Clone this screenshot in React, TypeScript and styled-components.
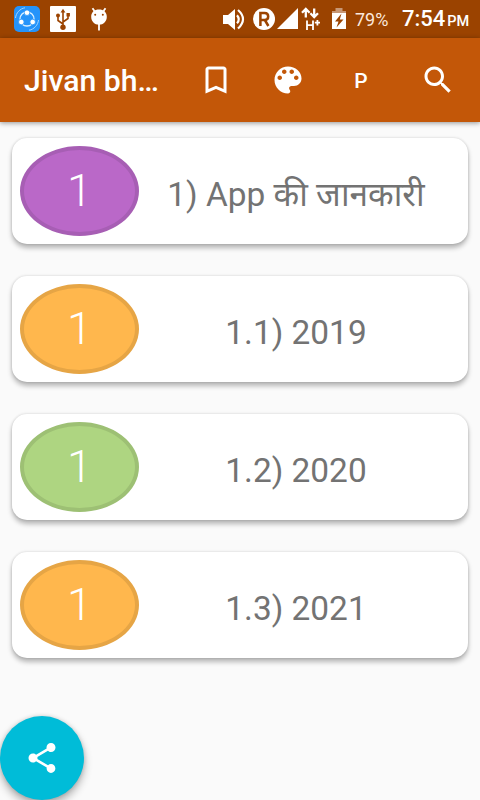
import React from "react";
import styled, { createGlobalStyle } from "styled-components";

const GlobalStyle = createGlobalStyle`
  * { box-sizing: border-box; }
  body { margin: 0; background: #fafafa; font-family: Roboto, "Noto Sans Devanagari", "Noto Sans", sans-serif; }
`;

const Screen = styled.div`
  position: relative;
  width: 480px;
  height: 800px;
  overflow: hidden;
  background: #fafafa;
  display: flex;
  flex-direction: column;
`;

const StatusBar = styled.header`
  flex: none;
  height: 38px;
  background: #9b4300;
  color: #fff;
  display: flex;
  align-items: center;
  padding: 0 11px 0 14px;
`;

const Notifications = styled.div`
  display: flex;
  align-items: center;
  gap: 10px;
  flex: 1;
`;

const Glyph = styled.svg`
  display: block;
  flex: none;
`;

const Signals = styled.div`
  display: flex;
  align-items: center;
`;

const Battery = styled.span`
  font-size: 18px;
  line-height: 38px;
  width: 54px;
  padding: 1px 0 0 7px;
  color: #fbe9dd;
`;

const Clock = styled.time`
  font-size: 22px;
  font-weight: 500;
  line-height: 38px;
  width: 67px;
  white-space: nowrap;
  padding-top: 2px;
`;

const Meridiem = styled.small`
  font-size: 14.5px;
  margin-left: 2px;
`;

const AppBar = styled.nav`
  flex: none;
  height: 84px;
  background: #c35708;
  color: #fff;
  display: flex;
  align-items: center;
  padding: 0 6px 0 24px;
  box-shadow: 0 1px 5px rgba(0, 0, 0, 0.42);
`;

const Title = styled.h1`
  margin: 0;
  padding-top: 1px;
  width: 156px;
  font-size: 30.2px;
  font-weight: 500;
  line-height: 40px;
  white-space: nowrap;
`;

const Action = styled.button<{ $wide?: boolean }>`
  width: ${(p) => (p.$wide ? 78 : 72)}px;
  height: 72px;
  border: 0;
  background: none;
  color: #fff;
  font: 500 21px Roboto, sans-serif;
  display: flex;
  align-items: center;
  justify-content: center;
  padding: ${(p) => (p.$wide ? "1px 4px 0 0" : "0")};
`;

const List = styled.main`
  display: flex;
  flex-direction: column;
  gap: 32px;
  padding: 16px 12px;
`;

const Card = styled.article`
  height: 106px;
  border-radius: 15px;
  background: #fff;
  display: flex;
  align-items: center;
  padding: 0 8px;
  box-shadow: 0 4px 5px rgba(0, 0, 0, 0.27), 0 0 3px rgba(0, 0, 0, 0.16);
`;

const Badge = styled.span<{ $fill: string; $edge: string }>`
  width: 119px;
  height: 90px;
  border-radius: 50%;
  background: ${(p) => p.$fill};
  border: 4px solid ${(p) => p.$edge};
  color: #fff;
  font-size: 45px;
  font-weight: 300;
  line-height: 82px;
  text-align: center;
`;

const Label = styled.span`
  flex: 1;
  padding: 7px 7px 0 0;
  text-align: center;
  font-size: 33.4px;
  line-height: 44px;
  color: #737373;
  white-space: nowrap;
`;

const ShareButton = styled.button`
  position: absolute;
  left: 0;
  bottom: 0;
  width: 84px;
  height: 84px;
  border: 0;
  padding: 0;
  border-radius: 50%;
  background: #00bcd8;
  color: #fff;
  display: flex;
  align-items: center;
  justify-content: center;
  box-shadow: 0 5px 9px rgba(0, 0, 0, 0.3), 0 0 4px rgba(0, 0, 0, 0.14);
`;

const MaterialIcon = ({ d }: { d: string }) => (
  <Glyph width="36" height="36" viewBox="0 0 24 24" fill="currentColor">
    <path d={d} />
  </Glyph>
);

const BOOKMARK = "M17 3H7c-1.1 0-2 .9-2 2v16l7-3 7 3V5c0-1.1-.9-2-2-2zm0 15l-5-2.18L7 18V5h10v13z";
const PALETTE =
  "M12 3c-4.97 0-9 4.03-9 9s4.03 9 9 9c.83 0 1.5-.67 1.5-1.5 0-.39-.15-.74-.39-1.01-.23-.26-.38-.61-.38-.99 0-.83.67-1.5 1.5-1.5H16c2.76 0 5-2.24 5-5 0-4.42-4.03-8-9-8zm-5.5 9c-.83 0-1.5-.67-1.5-1.5S5.67 9 6.5 9 8 9.67 8 10.5 7.33 12 6.5 12zm3-4C8.67 8 8 7.33 8 6.5S8.67 5 9.5 5s1.5.67 1.5 1.5S10.33 8 9.5 8zm5 0c-.83 0-1.5-.67-1.5-1.5S13.67 5 14.5 5s1.5.67 1.5 1.5S15.33 8 14.5 8zm3 4c-.83 0-1.5-.67-1.5-1.5S16.67 9 17.5 9s1.5.67 1.5 1.5-.67 1.5-1.5 1.5z";
const SEARCH =
  "M15.5 14h-.79l-.28-.27C15.41 12.59 16 11.11 16 9.5 16 5.91 13.09 3 9.5 3S3 5.91 3 9.5 5.91 16 9.5 16c1.61 0 3.09-.59 4.23-1.57l.27.28v.79l5 4.99L20.49 19l-4.99-5zm-6 0C7.01 14 5 11.99 5 9.5S7.01 5 9.5 5 14 7.01 14 9.5 11.99 14 9.5 14z";
const SHARE =
  "M18 16.08c-.76 0-1.44.3-1.96.77L8.91 12.7c.05-.23.09-.46.09-.7s-.04-.47-.09-.7l7.05-4.11c.54.5 1.25.81 2.04.81 1.66 0 3-1.34 3-3s-1.34-3-3-3-3 1.34-3 3c0 .24.04.47.09.7L8.04 9.81C7.5 9.31 6.79 9 6 9c-1.66 0-3 1.34-3 3s1.34 3 3 3c.79 0 1.5-.31 2.04-.81l7.12 4.16c-.05.21-.08.43-.08.65 0 1.61 1.31 2.92 2.92 2.92s2.92-1.31 2.92-2.92-1.31-2.92-2.92-2.92z";

const ShareItIcon = () => (
  <Glyph width="26" height="26" viewBox="0 0 26 26" fill="none">
    <rect width="26" height="26" rx="5" fill="#2493fa" />
    <circle cx="13" cy="13" r="7" stroke="#d9efff" strokeWidth="1.3" />
    <g fill="#fff" stroke="#2493fa" strokeWidth="0.8">
      <circle cx="13" cy="6.7" r="2.8" />
      <circle cx="7.3" cy="16" r="2.8" />
      <circle cx="18.7" cy="16" r="2.8" />
    </g>
    <path d="M1.5 12C2 7 6 2.5 11 1.8M24.5 14C24 19 20 23.5 15 24.2" stroke="#a3d4ff" strokeWidth="1" />
  </Glyph>
);

const UsbIcon = () => (
  <Glyph width="26" height="26" viewBox="0 0 26 26" fill="none">
    <rect width="26" height="26" rx="1" fill="#fff" />
    <g stroke="#9b4300" strokeWidth="1.6">
      <path d="M13 5v16M13 18l-5-3.5V10M13 16l5-3.5V9" />
    </g>
    <path d="M13 2.8l2.4 3.6h-4.8zM16.5 7h3.4v3.5h-3.4z" fill="#9b4300" />
    <circle cx="8" cy="9.5" r="2" fill="#9b4300" />
    <circle cx="13" cy="21.3" r="2.7" fill="#9b4300" />
  </Glyph>
);

const DroidIcon = () => (
  <Glyph width="26" height="26" viewBox="0 0 26 26" fill="none">
    <path d="M8.5 5L6.5 2.2M17.5 5l2-2.8M13 18v6.5" stroke="#fff" strokeWidth="1.8" />
    <path d="M5.2 10.8C5.2 6 8.5 3.5 13 3.5s7.8 2.5 7.8 7.3c0 4.5-3.4 8-7.8 8s-7.8-3.5-7.8-8z" fill="#fff" />
    <circle cx="9.2" cy="8.7" r="1" fill="#9b4300" />
    <circle cx="16.8" cy="8.7" r="1" fill="#9b4300" />
  </Glyph>
);

// Volume, roaming, cell strength, data type and charge, on one 128px strip.
const SystemIcons = () => (
  <Glyph width="128" height="38" viewBox="220 0 128 38">
    <path d="M223 15h5l7-6v21l-7-6h-5z" fill="#fff" />
    <path d="M237 15.2q3.5 4 0 8M238 10q10 9 0 18.5" fill="none" stroke="#fff" strokeWidth="2.2" />
    <circle cx="264" cy="19" r="11" fill="#fff" />
    <path d="M260.4 26V13h4.2q3.6 0 3.6 3.5t-3.6 3.5h-4M264.8 20l3.6 6" fill="none" stroke="#9b4300" strokeWidth="2.5" />
    <path d="M277 29L298 8v21z" fill="#fff" />
    <path d="M305.8 17.5V10M302 12.8l3.8-3.8 3.8 3.8M314.2 8.5v8M310.4 13.2l3.8 3.8 3.8-3.8" fill="none" stroke="#fff" strokeWidth="2.3" />
    <path d="M307 20.5v9.5M313 20.5v9.5M307 25.2h6M314.8 22.7h5.2M317.4 20v5.4" fill="none" stroke="#fff" strokeWidth="1.8" />
    <path d="M332 11h3.5V8h7v3h3.5v3h-14z" fill="#c79775" />
    <path d="M332 13h14v16h-14z" fill="#fff" />
    <path d="M341.5 13.5l-6.5 8h3.5l-2 6 7-8h-3.7z" fill="#9b4300" />
  </Glyph>
);

const PURPLE = { fill: "#ba68c8", edge: "#a75eb4" };
const ORANGE = { fill: "#ffb74d", edge: "#e6a545" };
const GREEN = { fill: "#aed581", edge: "#9dc074" };

const CHAPTERS = [
  { label: "1) App की जानकारी", tone: PURPLE },
  { label: "1.1) 2019", tone: ORANGE },
  { label: "1.2) 2020", tone: GREEN },
  { label: "1.3) 2021", tone: ORANGE },
];

export default function App() {
  return (
    <>
      <GlobalStyle />
      <Screen>
        <StatusBar>
          <Notifications>
            <ShareItIcon />
            <UsbIcon />
            <DroidIcon />
          </Notifications>
          <Signals>
            <SystemIcons />
            <Battery>79%</Battery>
            <Clock>
              7:54<Meridiem>PM</Meridiem>
            </Clock>
          </Signals>
        </StatusBar>
        <AppBar>
          <Title>Jivan bh…</Title>
          <Action aria-label="Bookmarks"><MaterialIcon d={BOOKMARK} /></Action>
          <Action aria-label="Theme"><MaterialIcon d={PALETTE} /></Action>
          <Action $wide>P</Action>
          <Action aria-label="Search"><MaterialIcon d={SEARCH} /></Action>
        </AppBar>
        <List>
          {CHAPTERS.map(({ label, tone }) => (
            <Card key={label}>
              <Badge $fill={tone.fill} $edge={tone.edge}>1</Badge>
              <Label>{label}</Label>
            </Card>
          ))}
        </List>
        <ShareButton aria-label="Share"><MaterialIcon d={SHARE} /></ShareButton>
      </Screen>
    </>
  );
}
